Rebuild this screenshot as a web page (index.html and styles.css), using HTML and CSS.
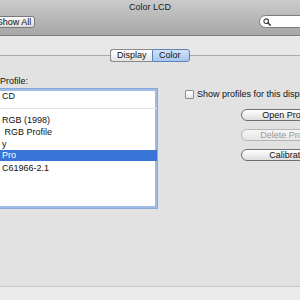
FILE: index.html
```html
<!DOCTYPE html>
<html lang="en">
<head>
  <meta charset="UTF-8">
  <title>Color LCD</title>
  <link rel="stylesheet" href="styles.css">
</head>
<body>
  <div class="window">
    <header class="toolbar">
      <div class="title">Color LCD</div>
      <div class="tools">
        <button class="show-all">Show All</button>
        <div class="search">
          <svg width="8" height="8" viewBox="0 0 8 8"><circle cx="3.2" cy="3.2" r="2.3" fill="none" stroke="#444" stroke-width="1.2"/><path d="M4.9 4.9 L7.3 7.3" stroke="#444" stroke-width="1.5" stroke-linecap="round"/></svg>
        </div>
      </div>
    </header>
    <main class="content">
      <div class="tabs">
        <span class="tab">Display</span>
        <span class="tab active">Color</span>
      </div>
      <section class="panel">
        <div class="left">
          <div class="label">Profile:</div>
          <div class="list">
            <div class="row">CD</div>
            <div class="row sep"></div>
            <div class="row">RGB (1998)</div>
            <div class="row">&nbsp;RGB Profile</div>
            <div class="row">y</div>
            <div class="row selected">Pro</div>
            <div class="row">C61966-2.1</div>
          </div>
        </div>
        <div class="right">
          <label class="check"><span class="box"></span>Show profiles for this display only</label>
          <div class="buttons">
            <button class="pill">Open Profile...</button>
            <button class="pill" disabled>Delete Profile...</button>
            <button class="pill">Calibrate...</button>
          </div>
        </div>
      </section>
      <footer class="bottom"></footer>
    </main>
  </div>
</body>
</html>
```

FILE: styles.css
```css
html, body {
  margin: 0; padding: 0;
  background: #e8e8e8;
  font-family: 'Liberation Sans', Arial, sans-serif;
  font-size: 9px;
  color: #111;
}
.window {
  width: 300px;
  height: 300px;
  overflow: hidden;
}
.toolbar {
  height: 35px;
  background: linear-gradient(#cbcbcb, #a6a6a6);
  border-bottom: 1px solid #7e7e7e;
}
.title {
  padding-top: 2px;
  line-height: 11px;
  text-align: center;
  color: #222;
}
.tools {
  display: flex;
  justify-content: space-between;
  margin-top: 2px;
}
.show-all {
  flex-shrink: 0;
  margin: 1px 0 0 -7px;
  width: 42px;
  height: 12px;
  padding: 0;
  border: 1px solid #7a7a7a;
  border-radius: 3px;
  background: linear-gradient(#fbfbfb, #dcdcdc);
  font: inherit;
  line-height: 10px;
  color: #111;
}
.search {
  flex-shrink: 0;
  width: 50px;
  height: 11px;
  margin-right: -14px;
  border: 1px solid #7d7d7d;
  border-radius: 7px;
  background: #fff;
  display: flex;
  align-items: center;
  padding-left: 3px;
}
.content {
  padding-top: 13px;
}
.tabs {
  position: relative;
  z-index: 1;
  display: flex;
  justify-content: center;
  margin-bottom: -7px;
}
.tab {
  height: 11px;
  line-height: 11px;
  padding: 0 6px;
  border: 1px solid #8a8a8a;
  background: linear-gradient(#ffffff, #e4e4e4);
  color: #111;
}
.tab:first-child {
  width: 29px;
  border-radius: 3px 0 0 3px;
  border-right: none;
}
.tab.active {
  width: 24px;
  border-color: #5d82b8;
  border-radius: 0 3px 3px 0;
  background: linear-gradient(#d3e3f8, #a7c6ef);
}
.panel {
  display: flex;
  height: 230px;
  background: #e2e2e2;
  border-top: 1px solid #a9a9a9;
  border-bottom: 1px solid #c6c6c6;
}
.left {
  flex-shrink: 0;
  margin-left: -20px;
  width: 178px;
  padding-top: 20px;
}
.label {
  line-height: 11px;
  padding-left: 20px;
  margin-bottom: 1px;
}
.list {
  box-sizing: border-box;
  height: 121px;
  background: #fff;
  border: 1px solid #8aa9d6;
  box-shadow: 0 0 0 2px #9dbde8 inset;
  padding: 1px 0 0 21px;
}
.row {
  height: 12px;
  line-height: 12px;
  white-space: nowrap;
  margin-left: -21px;
  padding-left: 21px;
}
.row.sep {
  height: 6px;
  border-bottom: 1px solid #e3e3e3;
  margin-bottom: 5px;
}
.row.selected {
  background: #3875d7;
  color: #fff;
  height: 11px;
  line-height: 11px;
  margin-bottom: 1px;
}
.right {
  flex-shrink: 0;
  margin-left: 27px;
  padding-top: 33px;
  white-space: nowrap;
}
.check {
  display: flex;
  align-items: center;
  gap: 3px;
  height: 10px;
  line-height: 10px;
}
.box {
  width: 7px;
  height: 7px;
  border: 1px solid #8c8c8c;
  border-radius: 1px;
  background: linear-gradient(#fff, #e6e6e6);
}
.buttons {
  margin: 10px 0 0 56px;
  display: flex;
  flex-direction: column;
  gap: 8px;
}
.pill {
  width: 100px;
  height: 12px;
  padding: 0;
  border: 1px solid #6f6f6f;
  border-radius: 6px;
  background: linear-gradient(#ffffff, #dedede);
  font: inherit;
  line-height: 10px;
  color: #111;
  text-align: center;
}
.pill:disabled {
  border-color: #b4b4b4;
  color: #9a9a9a;
  background: linear-gradient(#f6f6f6, #e6e6e6);
}
.bottom {
  height: 14px;
  background: #ebebeb;
}
```
